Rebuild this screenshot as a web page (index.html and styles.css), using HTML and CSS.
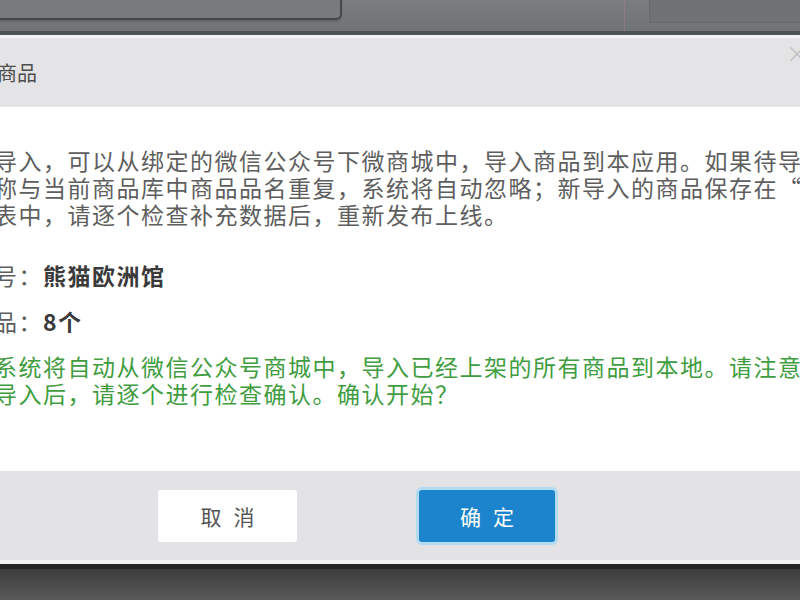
FILE: index.html
```html
<!DOCTYPE html>
<html lang="zh-CN">
<head>
<meta charset="utf-8">
<title>导入商品</title>
<link rel="stylesheet" href="styles.css">
</head>
<body>
<div class="backdrop-top">
  <div class="toolbar-btn"></div>
  <div class="toolbar-gap"></div>
  <div class="toolbar-right"></div>
</div>
<div class="dialog">
  <div class="dialog-header">
    <span class="title">商品</span>
    <span class="close">×</span>
  </div>
  <div class="dialog-body">
    <div class="para">
      <div class="line">导入，可以从绑定的微信公众号下微商城中，导入商品到本应用。如果待导入</div>
      <div class="line">称与当前商品库中商品品名重复，系统将自动忽略；新导入的商品保存在“</div>
      <div class="line">表中，请逐个检查补充数据后，重新发布上线。</div>
    </div>
    <div class="info info-first">号：<b>熊猫欧洲馆</b></div>
    <div class="info">品：<b>8个</b></div>
    <div class="notice">
      <div class="line">系统将自动从微信公众号商城中，导入已经上架的所有商品到本地。请注意</div>
      <div class="line">导入后，请逐个进行检查确认。确认开始？</div>
    </div>
  </div>
  <div class="dialog-footer">
    <button class="btn btn-cancel">取消</button>
    <button class="btn btn-ok">确定</button>
  </div>
</div>
<div class="backdrop-bottom"></div>
</body>
</html>
```
FILE: styles.css
```css
html, body {
  margin: 0;
  padding: 0;
}
body {
  width: 800px;
  height: 600px;
  overflow: hidden;
  background: #4a4a4a;
  font-family: "Noto Sans CJK SC", "Noto Sans", sans-serif;
  display: flex;
  flex-direction: column;
}
.backdrop-top {
  height: 31px;
  flex: none;
  background: linear-gradient(#7a7d80, #717477);
  display: flex;
  align-items: flex-start;
  overflow: hidden;
}
.toolbar-btn {
  width: 350px;
  height: 30px;
  margin-left: -12px;
  margin-top: -14px;
  border: 2px solid #45484b;
  border-radius: 6px;
  background: #787b7e;
  box-shadow: 0 2px 2px rgba(0,0,0,0.15);
  flex: none;
}
.toolbar-gap {
  flex: 1;
  border-right: 1px solid rgba(190,130,140,0.35);
  height: 31px;
  margin-right: 24px;
}
.toolbar-right {
  width: 150px;
  height: 22px;
  background: #6f7174;
  border-left: 1px solid #66686b;
  border-bottom: 1px solid #66686b;
  flex: none;
}
.dialog {
  flex: none;
  border-top: 4px solid #505356;
  display: flex;
  flex-direction: column;
}
.dialog-header {
  height: 69px;
  border-top: 3px solid #f3f3f4;
  background: #e4e4e6;
  display: flex;
  align-items: center;
  justify-content: space-between;
}
.title {
  margin-left: -3px;
  font-size: 20px;
  color: #4d4d4d;
}
.close {
  align-self: flex-start;
  margin-top: 2px;
  margin-right: -8px;
  font-size: 22px;
  color: #c4c4c4;
  line-height: 24px;
}
.dialog-body {
  height: 364px;
  background: #ffffff;
  padding-top: 40px;
  box-sizing: border-box;
  display: flex;
  flex-direction: column;
  overflow: hidden;
}
.line, .info {
  white-space: nowrap;
  margin-left: -6px;
  font-size: 23px;
  letter-spacing: 1.5px;
  line-height: 27px;
}
.para {
  color: #5e5e5e;
}
.info {
  color: #5e5e5e;
}
.info b {
  color: #3a3a3a;
  font-weight: 700;
}
.info-first {
  margin-top: 34px;
}
.info + .info {
  margin-top: 19px;
}
.notice {
  margin-top: 18px;
  color: #3f9d3f;
}
.dialog-footer {
  height: 89px;
  background: #e3e3e5;
  border-bottom: 4px solid #f4f4f4;
  display: flex;
  align-items: center;
  padding-left: 158px;
  gap: 122px;
}
.btn {
  font-family: "Noto Sans CJK SC", "Noto Sans", sans-serif;
  font-size: 21px;
  letter-spacing: 12px;
  padding: 0 0 0 12px;
  height: 52px;
  border: none;
  border-radius: 3px;
  cursor: pointer;
}
.btn-cancel {
  width: 139px;
  background: #ffffff;
  color: #555555;
  border-radius: 2px;
}
.btn-ok {
  width: 136px;
  background: #1b84cc;
  color: #ffffff;
  box-shadow: 0 0 0 3px #b3dcf4;
}
.backdrop-bottom {
  flex: 1;
  border-top: 5px solid #262626;
  background: linear-gradient(#3c3c3c, #5a5a5a);
}
```
